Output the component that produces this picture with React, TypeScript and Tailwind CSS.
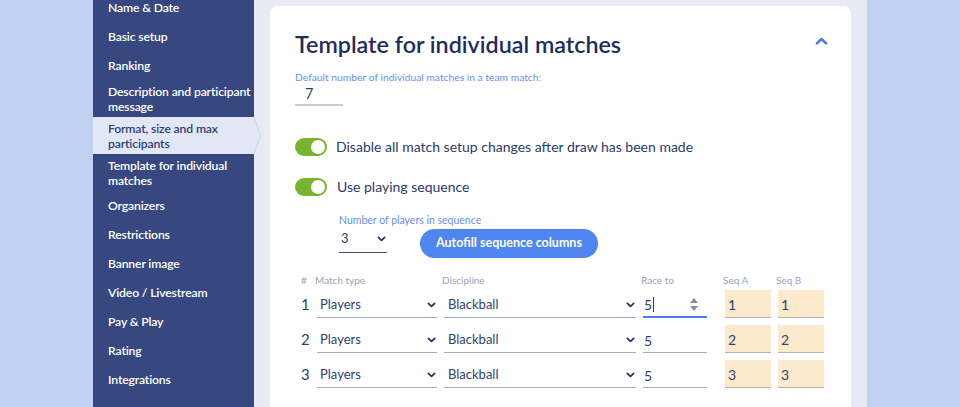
import React from "react";

type NavItem = { label: string; tall?: boolean; active?: boolean };

const navItems: NavItem[] = [
  { label: "Name & Date" },
  { label: "Basic setup" },
  { label: "Ranking" },
  { label: "Description and participant message", tall: true },
  { label: "Format, size and max participants", tall: true, active: true },
  { label: "Template for individual matches", tall: true },
  { label: "Organizers" },
  { label: "Restrictions" },
  { label: "Banner image" },
  { label: "Video / Livestream" },
  { label: "Pay & Play" },
  { label: "Rating" },
  { label: "Integrations" },
];

const rows = [
  { n: 1, race: "5", a: "1", b: "1", focused: true },
  { n: 2, race: "5", a: "2", b: "2" },
  { n: 3, race: "5", a: "3", b: "3" },
];

const Chevron = ({ className = "" }: { className?: string }) => (
  <svg viewBox="0 0 10 6" className={className} fill="none">
    <path d="M1.5 1.2 5 4.5l3.5-3.3" stroke="currentColor" strokeWidth="2" strokeLinecap="round" strokeLinejoin="round" />
  </svg>
);

const Toggle = () => (
  <div className="w-[32px] h-[18px] rounded-full bg-[#7ab32e] flex items-center justify-end pr-[2px]">
    <div className="w-[14px] h-[14px] rounded-full bg-white" />
  </div>
);

const Sidebar = () => (
  <div className="w-[161px] bg-[#36487f] shrink-0">
    <ul className="-mt-[7px]">
      {navItems.map((item) => (
        <li
          key={item.label}
          className={`relative flex items-center pl-[15px] text-[12.2px] tracking-[-0.15px] font-semibold leading-[15px] ${
            item.tall ? "h-[37px]" : "h-[29px]"
          } ${item.active ? "bg-[#e1e7f4] text-[#2e3f74]" : "text-white"}`}
        >
          {item.label}
          {item.active && (
            <span className="absolute -right-[8px] top-0 h-full w-[8px] overflow-hidden">
              <svg viewBox="0 0 8 37" className="h-full w-full" preserveAspectRatio="none">
                <path d="M0 0 L7 18.5 L0 37 Z" fill="#e1e7f4" />
                <path d="M0 0 L7 18.5 L0 37" fill="none" stroke="#c9cfdc" strokeWidth="0.8" />
              </svg>
            </span>
          )}
        </li>
      ))}
    </ul>
  </div>
);

const cols = "grid-cols-[16px_127px_199px_82px_53px_46px]";

export default function App() {
  return (
    <div className="flex w-[960px] h-[407px] overflow-hidden bg-[#c0d1f2] font-['Lato',sans-serif]">
      <div className="w-[93px] shrink-0" />
      <Sidebar />
      <div className="w-[613px] shrink-0 bg-[#e8ebf4] pl-[16px] pt-[6px]">
        <div className="relative w-[581px] h-[420px] bg-white rounded-[8px] pl-[25px] pt-[25px]">
          <Chevron className="absolute right-[23px] top-[31px] w-[13px] h-[8px] text-[#4a7cf0] rotate-180" />
          <h1 className="text-[23.3px] leading-[26px] font-semibold text-[#1f2d5c]">Template for individual matches</h1>

          <div className="mt-[14px] text-[10.3px] leading-[12px] text-[#6b8ef5]">
            Default number of individual matches in a team match:
          </div>
          <div className="w-[48px] h-[23px] border-b-2 border-[#c6cbd9] pl-[10px] text-[14.5px] leading-[21px] text-[#2f3f6f]">
            7
          </div>

          <div className="mt-[30px] flex items-center gap-[9px]">
            <Toggle />
            <span className="text-[14px] text-[#2b3a6b]">Disable all match setup changes after draw has been made</span>
          </div>
          <div className="mt-[19px] flex items-center gap-[10px]">
            <Toggle />
            <span className="text-[14px] text-[#2b3a6b]">Use playing sequence</span>
          </div>

          <div className="mt-[17px] ml-[44px]">
            <div className="text-[10.5px] leading-[12px] text-[#6b8ef5]">Number of players in sequence</div>
            <div className="flex items-start gap-[33px]">
              <div className="mt-[1px] w-[48px] h-[26px] border-b border-[#3c4c7e] flex items-center justify-between pb-[2px] pl-[2px] pr-[1px] text-[13px] text-[#2f3f6f]">
                <span>3</span>
                <Chevron className="w-[9px] h-[6px] text-[#23336a]" />
              </div>
              <button className="mt-[3px] h-[29px] px-[16px] rounded-full bg-[#4f86f0] text-white text-[12.5px] font-bold">
                Autofill sequence columns
              </button>
            </div>
          </div>

          <div className="mt-[16px] ml-[6px] grid grid-cols-[14px_127px_199px_82px_53px_46px] text-[10px] leading-[12px] text-[#9aa3b8]">
            <span>#</span>
            <span>Match type</span>
            <span>Discipline</span>
            <span>Race to</span>
            <span>Seq A</span>
            <span>Seq B</span>
          </div>

          <div className="mt-[1px] ml-[6px] flex flex-col gap-[7px]">
            {rows.map((r) => (
              <div key={r.n} className={`grid ${cols} items-end h-[28px]`}>
                <span className="text-[15px] leading-[28px] pt-[3px] text-[#2f3f6f]">{r.n}</span>
                <div className="mr-[7px] h-[28px] border-b border-[#a3acc6] flex items-center justify-between pt-[3px] pl-[3px] pr-[1px] text-[13px] text-[#2f3f6f]">
                  <span>Players</span>
                  <Chevron className="w-[9px] h-[6px] text-[#23336a]" />
                </div>
                <div className="mr-[7px] h-[28px] border-b border-[#a3acc6] flex items-center justify-between pt-[3px] pl-[4px] pr-[1px] text-[13px] text-[#2f3f6f]">
                  <span>Blackball</span>
                  <Chevron className="w-[9px] h-[6px] text-[#23336a]" />
                </div>
                <div
                  className={`mr-[18px] h-[28px] flex items-center justify-between pt-[3px] pl-[1px] pr-[9px] text-[14px] text-[#2f3f6f] ${
                    r.focused ? "border-b-2 border-[#4a7cf0]" : "border-b border-[#a3acc6]"
                  }`}
                >
                  <span className="flex items-center">
                    {r.race}
                    {r.focused && <span className="ml-[1px] inline-block w-px h-[15px] bg-[#2f3f6f]" />}
                  </span>
                  {r.focused && (
                    <span className="flex flex-col gap-[3px]">
                      <svg viewBox="0 0 8 5" className="w-[8px] h-[5px]"><path d="M0 5 4 0 8 5Z" fill="#8a8f99" /></svg>
                      <svg viewBox="0 0 8 5" className="w-[8px] h-[5px]"><path d="M0 0 4 5 8 0Z" fill="#8a8f99" /></svg>
                    </span>
                  )}
                </div>
                <div className="mr-[7px] h-[28px] bg-[#fde9cb] border-b border-[#b4b0a8] flex items-center pt-[2px] pl-[3px] text-[14px] text-[#2f3f6f]">
                  {r.a}
                </div>
                <div className="h-[28px] bg-[#fde9cb] border-b border-[#b4b0a8] flex items-center pt-[2px] pl-[3px] text-[14px] text-[#2f3f6f]">
                  {r.b}
                </div>
              </div>
            ))}
          </div>
        </div>
      </div>
    </div>
  );
}
